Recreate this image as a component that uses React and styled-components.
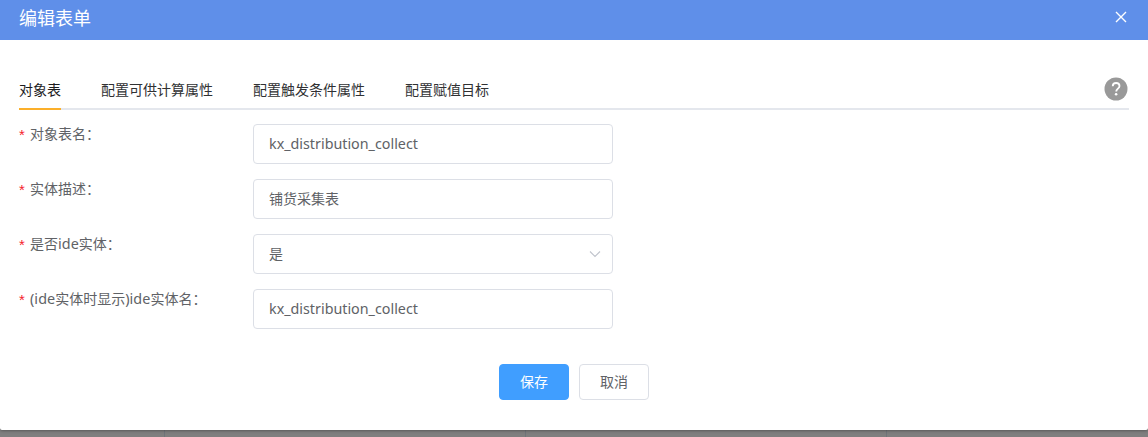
import React from 'react';
import styled, { createGlobalStyle } from 'styled-components';

const GlobalStyle = createGlobalStyle`
  *, *::before, *::after { box-sizing: border-box; }
  html, body { margin: 0; height: 100%; overflow: hidden; }
  body, input, button {
    font-family: "Noto Sans", "Noto Sans CJK SC", sans-serif;
    font-size: 14px;
  }
`;

const Page = styled.div`
  display: flex;
  flex-direction: column;
  height: 437px;
  overflow: hidden;
  background: #7f7f7f;
`;

const Dialog = styled.section`
  display: flex;
  flex-direction: column;
  flex: 0 0 430px;
  background: #fff;
  border-radius: 2px;
  box-shadow: 0 1px 3px rgba(0, 0, 0, 0.3);
  z-index: 1;
`;

const Header = styled.header`
  display: flex;
  justify-content: space-between;
  height: 40px;
  padding: 0 20px 0 19px;
  background: #5f8fe9;
  color: #fff;
`;

const Title = styled.h1`
  margin: 0;
  font-size: 18px;
  font-weight: 400;
  line-height: 36px;
`;

const CloseButton = styled.button`
  display: flex;
  align-items: center;
  height: 34px;
  padding: 0 1px 0 0;
  border: 0;
  background: none;
  color: #fff;
`;

const TabBar = styled.nav`
  display: flex;
  height: 40px;
  margin: 30px 19px 0;
  border-bottom: 2px solid #e4e7ed;
`;

const Tab = styled.a`
  height: 40px;
  margin-right: 40px;
  border-bottom: 2px solid ${({ $active }) => ($active ? '#fbaf2a' : 'transparent')};
  color: ${({ $active }) => ($active ? '#1c1c1e' : '#303133')};
  line-height: 39px;
  white-space: nowrap;
`;

const Help = styled.span`
  display: flex;
  margin: 7px 1px 0 auto;
`;

const Form = styled.form`
  display: flex;
  flex-direction: column;
  gap: 15px;
  padding: 14px 19px 0;
`;

const Row = styled.div`
  display: flex;
  height: 40px;
`;

const Label = styled.label`
  display: flex;
  width: 234px;
  color: #606266;
  line-height: 19px;
  white-space: nowrap;

  &::before {
    content: '*';
    width: 11px;
    color: #f5222d;
    font-family: "Liberation Sans", sans-serif;
    font-size: 15px;
    line-height: 21px;
  }
`;

const Latin = styled.span`
  font-size: 14.4px;
  letter-spacing: 0.05px;
`;

const Field = styled.div`
  display: flex;
  align-items: center;
  justify-content: space-between;
  width: 360px;
  height: 40px;
  padding: 0 11px 0 15px;
  border: 1px solid #dcdfe6;
  border-radius: 4px;
  color: #606266;
`;

const Value = styled.span`
  font-size: ${({ $latin }) => ($latin ? '14.3px' : '14px')};
  line-height: 38px;
`;

const Actions = styled.footer`
  display: flex;
  justify-content: center;
  gap: 10px;
  margin-top: 35px;
`;

const Button = styled.button`
  width: 70px;
  height: 36px;
  padding: 0;
  border: 1px solid ${({ $primary }) => ($primary ? '#409eff' : '#dcdfe6')};
  border-radius: 4px;
  background: ${({ $primary }) => ($primary ? '#409eff' : '#fff')};
  color: ${({ $primary }) => ($primary ? '#fff' : '#606266')};
  font-weight: 400;
  line-height: 34px;
`;

const TableBehind = styled.div`
  display: grid;
  grid-template-columns: 165px 361px 361px 1fr;
  height: 7px;
`;

const Cell = styled.div`
  border-right: 1px solid #70757a;

  &:last-child { border-right: 0; }
`;

const tabs = ['对象表', '配置可供计算属性', '配置触发条件属性', '配置赋值目标'];

const fields = [
  { id: 'table', label: '对象表名：', value: 'kx_distribution_collect', latin: true },
  { id: 'description', label: '实体描述：', value: '铺货采集表' },
  { id: 'isIde', label: <>是否<Latin>ide</Latin>实体：</>, value: '是', select: true },
  {
    id: 'ideName',
    label: <><Latin>(ide</Latin>实体时显示<Latin>)ide</Latin>实体名：</>,
    value: 'kx_distribution_collect',
    latin: true,
  },
];

const CloseIcon = () => (
  <svg width="12" height="12" viewBox="0 0 12 12" fill="none" stroke="currentColor" strokeWidth="1.4">
    <path d="M1 1 11 11M11 1 1 11" />
  </svg>
);

const HelpIcon = () => (
  <svg width="24" height="24" viewBox="0 0 24 24" fill="none">
    <circle cx="12" cy="12" r="11.5" fill="#999" />
    <path d="M8.7 9.2C8.8 7.1 10.1 6 12.1 6c2 0 3.4 1.2 3.4 2.9 0 2.6-3.3 2.8-3.3 5.6" stroke="#fff" strokeWidth="1.8" />
    <circle cx="12.1" cy="17.3" r="1.3" fill="#fff" />
  </svg>
);

const ChevronIcon = () => (
  <svg width="12" height="8" viewBox="0 0 12 8" fill="none" stroke="#c0c4cc" strokeWidth="1.1">
    <path d="M1 1.5 6 6.5 11 1.5" />
  </svg>
);

export default function App() {
  return (
    <Page>
      <GlobalStyle />
      <Dialog>
        <Header>
          <Title>编辑表单</Title>
          <CloseButton type="button" aria-label="关闭"><CloseIcon /></CloseButton>
        </Header>
        <TabBar>
          {tabs.map((tab, i) => <Tab key={tab} $active={i === 0}>{tab}</Tab>)}
          <Help><HelpIcon /></Help>
        </TabBar>
        <Form>
          {fields.map((f) => (
            <Row key={f.id}>
              <Label><span>{f.label}</span></Label>
              <Field>
                <Value $latin={f.latin}>{f.value}</Value>
                {f.select && <ChevronIcon />}
              </Field>
            </Row>
          ))}
        </Form>
        <Actions>
          <Button type="button" $primary>保存</Button>
          <Button type="button">取消</Button>
        </Actions>
      </Dialog>
      <TableBehind>
        <Cell /><Cell /><Cell /><Cell />
      </TableBehind>
    </Page>
  );
}
